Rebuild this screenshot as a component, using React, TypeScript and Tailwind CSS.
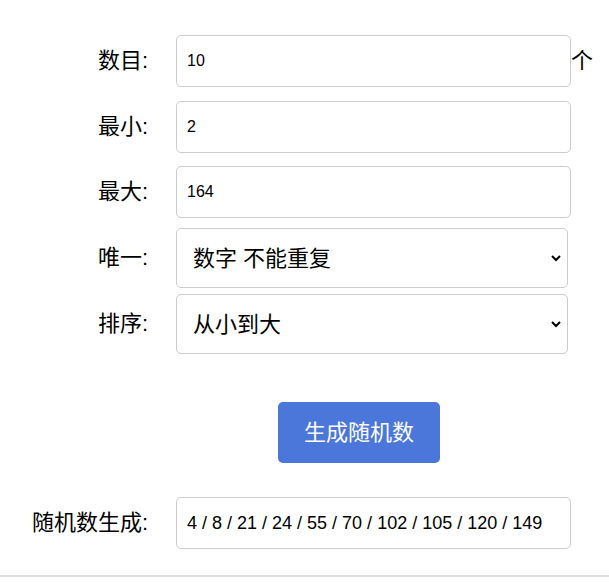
import React from "react";

const labelCls =
  "w-[150px] shrink-0 text-right text-[22px] text-black pr-[2px] leading-none";
const inputCls =
  "h-[52px] w-[395px] rounded-[5px] border border-[#cccccc] bg-white px-[10px] text-black outline-none";
const selectCls =
  "h-[60px] w-[392px] appearance-none rounded-[5px] border border-[#cccccc] bg-white pl-[16px] text-[22px] text-black outline-none";

function Chevron() {
  return (
    <svg
      className="pointer-events-none absolute right-[6px] top-1/2 -translate-y-1/2"
      width="12"
      height="8"
      viewBox="0 0 12 8"
    >
      <path d="M2 2 L6 6 L10 2" fill="none" stroke="#000" strokeWidth="2" />
    </svg>
  );
}

export default function App() {
  return (
    <div
      className="w-[609px] h-[582px] bg-white"
      style={{ fontFamily: '"Liberation Sans", "Noto Sans CJK SC", sans-serif' }}
    >
      <div className="h-[577px] border-b-2 border-[#dddddd] pt-[35px]">
        <div className="flex items-center">
          <label className={labelCls}>数目:</label>
          <input className={`${inputCls} ml-[26px] text-[16px]`} defaultValue="10" />
          <span className="text-[22px] leading-none text-black">个</span>
        </div>
        <div className="mt-[14px] flex items-center">
          <label className={labelCls}>最小:</label>
          <input className={`${inputCls} ml-[26px] text-[16px]`} defaultValue="2" />
        </div>
        <div className="mt-[13px] flex items-center">
          <label className={labelCls}>最大:</label>
          <input className={`${inputCls} ml-[26px] text-[16px]`} defaultValue="164" />
        </div>
        <div className="mt-[10px] flex items-center">
          <label className={labelCls}>唯一:</label>
          <div className="relative ml-[26px]">
            <select className={selectCls} defaultValue="a">
              <option value="a">数字 不能重复</option>
              <option value="b">数字 可以重复</option>
            </select>
            <Chevron />
          </div>
        </div>
        <div className="mt-[6px] flex items-center">
          <label className={labelCls}>排序:</label>
          <div className="relative ml-[26px]">
            <select className={selectCls} defaultValue="a">
              <option value="a">从小到大</option>
              <option value="b">从大到小</option>
              <option value="c">不排序</option>
            </select>
            <Chevron />
          </div>
        </div>
        <div className="mt-[48px] flex">
          <button className="ml-[278px] h-[61px] w-[162px] rounded-[5px] bg-[#4a77d9] text-[22px] text-white">
            生成随机数
          </button>
        </div>
        <div className="mt-[34px] flex items-center">
          <label className={labelCls}>随机数生成:</label>
          <input
            className={`${inputCls} ml-[26px] text-[18px]`}
            defaultValue="4 / 8 / 21 / 24 / 55 / 70 / 102 / 105 / 120 / 149"
          />
        </div>
      </div>
    </div>
  );
}
